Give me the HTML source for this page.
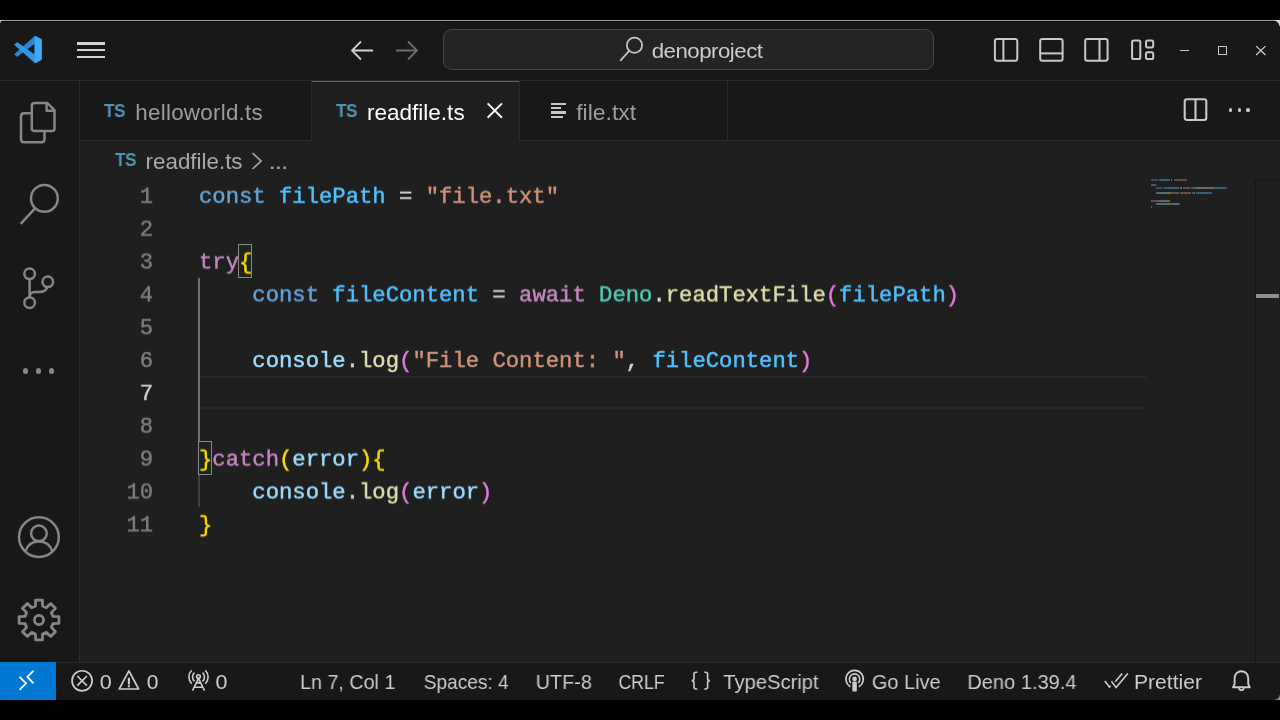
<!DOCTYPE html>
<html>
<head>
<meta charset="utf-8">
<title>readfile.ts - denoproject - Visual Studio Code</title>
<style>
html,body{margin:0;padding:0;background:#000;}
body{width:1280px;height:720px;overflow:hidden;position:relative;font-family:"Liberation Sans",sans-serif;}
div,span,svg{position:absolute;box-sizing:border-box;}
span.i{position:static;}
#win{left:0;top:20px;width:1280px;height:680px;background:#181818;border-radius:0;overflow:hidden;}
#topline{left:0;top:20px;width:1280px;height:2px;background:#070707;border-top:1px solid #a2a2a2;}
#titleborder{left:0;top:79.6px;width:1280px;height:1px;background:#2b2b2b;}
#actborder{left:79px;top:80.6px;width:1px;height:582px;background:#2b2b2b;}
#tabborder{left:80px;top:139.8px;width:1200px;height:1px;background:#2b2b2b;}
#editor{left:80px;top:140.8px;width:1200px;height:522px;background:#1f1f1f;}
#statusborder{left:0;top:661.8px;width:1280px;height:1px;background:#2b2b2b;}
.tabsep{top:80.6px;width:1px;height:59.2px;background:#2b2b2b;}
.lbl,.ts,.st,.code,.ln{will-change:transform;}
.lbl{white-space:nowrap;font-size:22px;line-height:26px;height:26px;color:#9d9d9d;}
.ts{font-weight:bold;color:#4f93b6;font-size:18.6px;line-height:20px;height:20px;white-space:nowrap;letter-spacing:-0.5px;transform-origin:0 0;transform:scaleX(0.93);}
.st{white-space:nowrap;font-size:20.6px;line-height:24px;height:24px;top:670.4px;color:#cccccc;}
.code{left:199px;font-family:"Liberation Mono",monospace;font-size:22.22px;line-height:37px;-webkit-text-stroke:0.45px;height:33px;white-space:pre;color:#d4d4d4;}
.ln{font-family:"Liberation Mono",monospace;font-size:22.17px;line-height:37px;-webkit-text-stroke:0.4px;height:33px;width:60px;text-align:right;color:#7b7e84;left:93px;white-space:pre;}
.k{color:#62a3da}.v{color:#4fc1ff}.s{color:#ce9178}.c{color:#c586c0}.t{color:#4ec9b0}.f{color:#dcdcaa}.p{color:#9cdcfe}.b1{color:#ffd700}.b2{color:#dc7cd9}
</style>
</head>
<body>
<div id="win"></div>
<div id="topline"></div>
<div id="titleborder"></div>
<div id="actborder"></div>
<div id="tabborder"></div>
<div id="editor"></div>
<div id="statusborder"></div>
<!--CORNERS-->
<div style="left:1274px;top:20px;width:6px;height:6px;background:radial-gradient(circle at 0 100%, rgba(0,0,0,0) 4.6px, #d6d6d6 5.8px)"></div>
<div style="left:1275px;top:695px;width:5px;height:5px;background:radial-gradient(circle at 0 0, rgba(0,0,0,0) 4px, #9a9a9a 5.2px)"></div>
<div style="left:0px;top:20px;width:3px;height:3px;background:radial-gradient(circle at 100% 100%, rgba(0,0,0,0) 2.2px, #d0d0d0 3px)"></div>
<!--TITLEBAR-->
<!-- VS Code logo -->
<svg style="left:13px;top:35px" width="30" height="29" viewBox="0 0 30 29">
  <path d="M21.600 1.300 L21.600 8.800 L4.100 21.700 L1.300 19.300 Z" fill="#2a86d2" stroke="#2a86d2" stroke-width="0.300" stroke-linejoin="round"/>
  <path d="M21.600 27.700 L21.600 19.500 L4.100 7.300 L1.300 9.700 Z" fill="#2f97e6" stroke="#2f97e6" stroke-width="0.300" stroke-linejoin="round"/>
  <path d="M22.300 1.900 L28 4.900 L28 24.100 L22.300 27.100 Z" fill="#3ea9f5" stroke="#3ea9f5" stroke-width="1.800" stroke-linejoin="round"/>
</svg>
<!-- hamburger -->
<div style="left:77px;top:42.4px;width:28px;height:2.3px;background:#d4d4d4"></div>
<div style="left:77px;top:49.2px;width:28px;height:2.3px;background:#d4d4d4"></div>
<div style="left:77px;top:56.1px;width:28px;height:2.3px;background:#d4d4d4"></div>
<!-- nav arrows -->
<svg style="left:349px;top:39px" width="26" height="24" viewBox="0 0 26 24"><path d="M12 2.5 L3 11.5 L12 20.5 M3 11.5 H24" fill="none" stroke="#d0d0d0" stroke-width="1.8"/></svg>
<svg style="left:394px;top:39px" width="26" height="24" viewBox="0 0 26 24"><path d="M14 2.5 L23 11.5 L14 20.5 M23 11.5 H2" fill="none" stroke="#6e6e6e" stroke-width="1.8"/></svg>
<!-- command center -->
<div style="left:443px;top:29.3px;width:491px;height:40.7px;border:1.2px solid #484848;border-radius:9px;background:#242424"></div>
<svg style="left:617px;top:34px" width="30" height="30" viewBox="0 0 30 30"><circle cx="17.5" cy="11.3" r="7.6" fill="none" stroke="#c4c4c4" stroke-width="1.8"/><path d="M12.2 16.8 L3.2 26.8" stroke="#c4c4c4" stroke-width="1.8" fill="none"/></svg>
<span id="t_cmd" class="lbl" style="transform-origin:0 0;transform:translateX(0.64px) scaleX(1.1133);left:651px;top:38px;font-size:20px;color:#cccccc;letter-spacing:-0.45px">denoproject</span>
<!-- layout controls -->
<svg style="left:992px;top:35.5px" width="28" height="28" viewBox="0 0 28 28"><rect x="2.9" y="2.9" width="22.4" height="21.8" rx="2.2" fill="none" stroke="#c8c8c8" stroke-width="2"/><path d="M11.4 3 V24.6" stroke="#c8c8c8" stroke-width="2"/></svg>
<svg style="left:1037px;top:35.5px" width="28" height="28" viewBox="0 0 28 28"><rect x="3.2" y="2.9" width="22.4" height="21.8" rx="2.2" fill="none" stroke="#c8c8c8" stroke-width="2"/><path d="M3.2 17.4 H25.6" stroke="#c8c8c8" stroke-width="2"/></svg>
<svg style="left:1082px;top:35.5px" width="28" height="28" viewBox="0 0 28 28"><rect x="3.2" y="2.9" width="22.4" height="21.8" rx="2.2" fill="none" stroke="#c8c8c8" stroke-width="2"/><path d="M17.5 3 V24.6" stroke="#c8c8c8" stroke-width="2"/></svg>
<svg style="left:1129px;top:35.5px" width="28" height="28" viewBox="0 0 28 28"><rect x="3.100" y="4.600" width="8.200" height="18.500" rx="1.600" fill="none" stroke="#c8c8c8" stroke-width="2"/><rect x="17" y="4.600" width="7.200" height="6.800" rx="1.600" fill="none" stroke="#c8c8c8" stroke-width="2"/><rect x="17" y="16.300" width="7.200" height="6.800" rx="1.600" fill="none" stroke="#c8c8c8" stroke-width="2"/></svg>
<!-- window controls -->
<div style="left:1180px;top:50px;width:9.3px;height:1.1px;background:#c8c8c8"></div>
<div style="left:1217.5px;top:45.7px;width:9.6px;height:9.6px;border:1px solid #c8c8c8"></div>
<svg style="left:1254px;top:44px" width="14" height="14" viewBox="0 0 14 14"><path d="M2.100 2.100 L11.500 11 M11.500 2.100 L2.100 11" stroke="#d4d4d4" stroke-width="1.200" fill="none"/></svg>
<!--/TITLEBAR-->
<!--ACTIVITY-->
<!-- files icon -->
<svg style="left:16px;top:98px" width="44" height="50" viewBox="0 0 44 50">
  <g fill="none" stroke="#868686" stroke-width="2.5" stroke-linejoin="round">
    <path d="M15.6 15.3 H8 Q5 15.3 5 18.3 V41.2 Q5 44.2 8 44.2 H25.5 Q28.5 44.2 28.5 41.200 V33.8"/>
    <path d="M18.7 4.900 H31.2 L38.5 12.200 V30.8 Q38.5 33 36.3 33 H18.700 Q15.8 33 15.8 30.800 V7.800 Q15.800 4.900 18.700 4.900 Z"/>
    <path d="M30.6 5.4 V12.8 H38"/>
  </g>
</svg>
<!-- search icon -->
<svg style="left:14px;top:178px" width="52" height="52" viewBox="0 0 52 52">
  <circle cx="30.4" cy="20.4" r="13.4" fill="none" stroke="#868686" stroke-width="2.5"/>
  <path d="M21 30.400 L6.7 45.8" stroke="#868686" stroke-width="2.5" fill="none"/>
</svg>
<!-- source control -->
<svg style="left:14px;top:262px" width="52" height="52" viewBox="0 0 52 52">
  <g fill="none" stroke="#868686" stroke-width="2.5">
    <circle cx="15.6" cy="11.8" r="5.3"/>
    <circle cx="15.600" cy="40.7" r="5.300"/>
    <circle cx="33.8" cy="19.8" r="5.300"/>
    <path d="M15.600 17.1 V35.4"/>
    <path d="M33.3 25.1 Q32 30 25 30 H21 Q15.600 30 15.600 35.4"/>
  </g>
</svg>
<!-- dots -->
<div style="left:23px;top:368.3px;width:5.4px;height:5.4px;border-radius:50%;background:#868686"></div>
<div style="left:35.8px;top:368.300px;width:5.4px;height:5.4px;border-radius:50%;background:#868686"></div>
<div style="left:48.8px;top:368.300px;width:5.4px;height:5.4px;border-radius:50%;background:#868686"></div>
<!-- account -->
<svg style="left:15px;top:513px" width="48" height="48" viewBox="0 0 48 48">
  <g fill="none" stroke="#868686" stroke-width="2.5">
    <circle cx="23.9" cy="24.1" r="19.9"/>
    <circle cx="23.900" cy="20.3" r="7.8"/>
    <path d="M10.6 38.2 Q13.6 28.6 23.900 28.6 Q34.2 28.600 37.2 38.200"/>
  </g>
</svg>
<!-- gear placeholder (generated) -->
<svg style="left:14.9px;top:596px" width="48" height="48" viewBox="0 0 48 48"><g fill="none" stroke="#868686" stroke-width="2.8" stroke-linejoin="round"><path d="M20.44 10.05 L20.58 4.09 L27.42 4.09 L27.56 10.05 L31.35 11.62 L35.66 7.51 L40.49 12.34 L36.38 16.65 L37.95 20.44 L43.91 20.58 L43.91 27.42 L37.95 27.56 L36.38 31.35 L40.49 35.66 L35.66 40.49 L31.35 36.38 L27.56 37.95 L27.42 43.91 L20.58 43.91 L20.44 37.95 L16.65 36.38 L12.34 40.49 L7.51 35.66 L11.62 31.35 L10.05 27.56 L4.09 27.42 L4.09 20.58 L10.05 20.44 L11.62 16.65 L7.51 12.34 L12.34 7.51 L16.65 11.62 Z"/><circle cx="24" cy="24" r="4.6"/></g></svg>
<!--/ACTIVITY-->
<!--TABS-->
<!-- tab separators -->
<div class="tabsep" style="left:311px"></div>
<div class="tabsep" style="left:519px"></div>
<div class="tabsep" style="left:727.4px"></div>
<!-- active tab -->
<div style="left:312px;top:80.6px;width:207px;height:60.4px;background:#1f1f1f"></div>
<div style="left:312px;top:80.5px;width:207px;height:1.4px;background:#2178c4"></div>
<!-- tab 1 -->
<span class="ts" style="left:104.3px;top:100.7px">TS</span>
<span id="t_tab1" class="lbl" style="transform-origin:0 0;transform:translateX(0.31px) scaleX(1.0170);left:135px;top:100px;letter-spacing:0.25px">helloworld.ts</span>
<!-- tab 2 -->
<span class="ts" style="left:336.3px;top:100.7px">TS</span>
<span id="t_tab2" class="lbl" style="transform-origin:0 0;transform:translateX(0.88px) scaleX(1.0252);left:366px;top:100px;color:#ffffff">readfile.ts</span>
<svg style="left:484px;top:100px" width="22" height="22" viewBox="0 0 22 22"><path d="M3.6 3.400 L18 17.8 M18 3.400 L3.600 17.800" stroke="#f4f4f4" stroke-width="2" fill="none"/></svg>
<!-- tab 3 -->
<div style="left:551px;top:102.6px;width:15px;height:2.3px;background:#c6c6c6"></div>
<div style="left:551px;top:107px;width:9.5px;height:2.3px;background:#c6c6c6"></div>
<div style="left:551px;top:111.4px;width:15px;height:2.3px;background:#c6c6c6"></div>
<div style="left:551px;top:115.8px;width:11.5px;height:2.3px;background:#c6c6c6"></div>
<span id="t_tab3" class="lbl" style="transform-origin:0 0;transform:translateX(0.21px) scaleX(1.0448);left:576px;top:100px">file.txt</span>
<!-- editor actions -->
<svg style="left:1181px;top:96px" width="28" height="28" viewBox="0 0 28 28"><rect x="3.700" y="3.200" width="21.6" height="20.8" rx="2.200" fill="none" stroke="#c8c8c8" stroke-width="2.1"/><path d="M14.5 3.200 V24" stroke="#c8c8c8" stroke-width="2.1"/></svg>
<div style="left:1228.8px;top:108.3px;width:3.7px;height:3.7px;border-radius:50%;background:#c8c8c8"></div>
<div style="left:1237.5px;top:108.3px;width:3.7px;height:3.7px;border-radius:50%;background:#c8c8c8"></div>
<div style="left:1246.300px;top:108.3px;width:3.7px;height:3.7px;border-radius:50%;background:#c8c8c8"></div>
<!-- breadcrumb -->
<span class="ts" style="left:115.2px;top:149.7px">TS</span>
<span id="t_bc" class="lbl" style="transform-origin:0 0;transform:translateX(0.60px) scaleX(1.0162);left:145px;top:149px;color:#a9a9a9">readfile.ts</span>
<svg style="left:249px;top:150px" width="16" height="22" viewBox="0 0 16 22"><path d="M3.5 3 L12 11 L3.500 19" stroke="#a9a9a9" stroke-width="1.700" fill="none"/></svg>
<span id="t_bcd" class="lbl" style="transform-origin:0 0;transform:translateX(0.61px) scaleX(1.1961);left:268px;top:149px;color:#a9a9a9;letter-spacing:-0.9px">...</span>
<!--/TABS-->
<!--EDITOR-->
<!-- current line highlight -->
<div style="left:199px;top:375.8px;width:947px;height:32.8px;border-top:2px solid #282828;border-bottom:2px solid #282828"></div>
<!-- indent guides -->
<div style="left:198.4px;top:277.6px;width:1.9px;height:163px;background:#707070"></div>
<div style="left:198.4px;top:474.4px;width:1.9px;height:32.8px;background:#404040"></div>
<!-- bracket match -->
<div style="left:238.3px;top:243.8px;width:14px;height:34px;border:1.6px solid #888888;background:rgba(0,100,0,0.1)"></div>
<div style="left:198.3px;top:440.6px;width:14px;height:34px;border:1.6px solid #888888;background:rgba(0,100,0,0.1)"></div>
<!-- line numbers -->
<span class="ln" style="top:178px;transform:translateY(0.80px) rotate(0.002deg)">1</span>
<span class="ln" style="top:211px;transform:translateY(0.65px) rotate(0.002deg)">2</span>
<span class="ln" style="top:244px;transform:translateY(0.50px) rotate(0.002deg)">3</span>
<span class="ln" style="top:277px;transform:translateY(0.35px) rotate(0.002deg)">4</span>
<span class="ln" style="top:310px;transform:translateY(0.20px) rotate(0.002deg)">5</span>
<span class="ln" style="top:343px;transform:translateY(0.05px) rotate(0.002deg)">6</span>
<span class="ln" style="top:375px;transform:translateY(0.90px) rotate(0.002deg);color:#cccccc">7</span>
<span class="ln" style="top:408px;transform:translateY(0.75px) rotate(0.002deg)">8</span>
<span class="ln" style="top:441px;transform:translateY(0.60px) rotate(0.002deg)">9</span>
<span class="ln" style="top:474px;transform:translateY(0.45px) rotate(0.002deg)">10</span>
<span class="ln" style="top:507px;transform:translateY(0.30px) rotate(0.002deg)">11</span>
<!-- code -->
<span class="code" style="top:178px;transform:translateY(0.80px) rotate(0.002deg)"><span class="i k">const</span> <span class="i v">filePath</span> = <span class="i s">"file.txt"</span></span>
<span class="code" style="top:244px;transform:translateY(0.50px) rotate(0.002deg)"><span class="i c">try</span><span class="i b1">{</span></span>
<span class="code" style="top:277px;transform:translateY(0.35px) rotate(0.002deg)">    <span class="i k">const</span> <span class="i v">fileContent</span> = <span class="i c">await</span> <span class="i t">Deno</span>.<span class="i f">readTextFile</span><span class="i b2">(</span><span class="i v">filePath</span><span class="i b2">)</span></span>
<span class="code" style="top:343px;transform:translateY(0.05px) rotate(0.002deg)">    <span class="i p">console</span>.<span class="i f">log</span><span class="i b2">(</span><span class="i s">"File Content: "</span>, <span class="i v">fileContent</span><span class="i b2">)</span></span>
<span class="code" style="top:441px;transform:translateY(0.60px) rotate(0.002deg)"><span class="i b1">}</span><span class="i c">catch</span><span class="i b1">(</span><span class="i p">error</span><span class="i b1">){</span></span>
<span class="code" style="top:474px;transform:translateY(0.45px) rotate(0.002deg)">    <span class="i p">console</span>.<span class="i f">log</span><span class="i b2">(</span><span class="i p">error</span><span class="i b2">)</span></span>
<span class="code" style="top:507px;transform:translateY(0.30px) rotate(0.002deg)"><span class="i b1">}</span></span>
<!-- scrollbar / overview ruler -->
<div style="left:1254.6px;top:179px;width:1.4px;height:484px;background:#141414"></div>
<div style="left:1255px;top:179px;width:25px;height:1.2px;background:#161616"></div>
<div style="left:1256px;top:294px;width:23.2px;height:4px;background:#8e8e8e"></div>
<!--MINIMAP-->
<div style="left:1151.00px;top:179.05px;width:6.67px;height:1.8px;background:#569cd6;opacity:0.4"></div>
<div style="left:1159.01px;top:179.05px;width:10.68px;height:1.8px;background:#4fc1ff;opacity:0.4"></div>
<div style="left:1171.03px;top:179.05px;width:1.33px;height:1.8px;background:#d4d4d4;opacity:0.4"></div>
<div style="left:1173.70px;top:179.05px;width:13.35px;height:1.8px;background:#ce9178;opacity:0.4"></div>
<div style="left:1151.00px;top:184.39px;width:4.00px;height:1.8px;background:#c586c0;opacity:0.4"></div>
<div style="left:1155.01px;top:184.39px;width:1.33px;height:1.8px;background:#ffd700;opacity:0.4"></div>
<div style="left:1156.34px;top:187.06px;width:6.67px;height:1.8px;background:#569cd6;opacity:0.4"></div>
<div style="left:1164.35px;top:187.06px;width:14.68px;height:1.8px;background:#4fc1ff;opacity:0.4"></div>
<div style="left:1180.37px;top:187.06px;width:1.33px;height:1.8px;background:#d4d4d4;opacity:0.4"></div>
<div style="left:1183.04px;top:187.06px;width:6.67px;height:1.8px;background:#c586c0;opacity:0.4"></div>
<div style="left:1191.05px;top:187.06px;width:5.34px;height:1.8px;background:#4ec9b0;opacity:0.4"></div>
<div style="left:1196.39px;top:187.06px;width:1.33px;height:1.8px;background:#d4d4d4;opacity:0.4"></div>
<div style="left:1197.72px;top:187.06px;width:16.02px;height:1.8px;background:#dcdcaa;opacity:0.4"></div>
<div style="left:1213.74px;top:187.06px;width:1.33px;height:1.8px;background:#da70d6;opacity:0.4"></div>
<div style="left:1215.08px;top:187.06px;width:10.68px;height:1.8px;background:#4fc1ff;opacity:0.4"></div>
<div style="left:1225.76px;top:187.06px;width:1.33px;height:1.8px;background:#da70d6;opacity:0.4"></div>
<div style="left:1156.34px;top:192.40px;width:9.34px;height:1.8px;background:#9cdcfe;opacity:0.4"></div>
<div style="left:1165.68px;top:192.40px;width:1.33px;height:1.8px;background:#d4d4d4;opacity:0.4"></div>
<div style="left:1167.02px;top:192.40px;width:4.00px;height:1.8px;background:#dcdcaa;opacity:0.4"></div>
<div style="left:1171.03px;top:192.40px;width:1.33px;height:1.8px;background:#da70d6;opacity:0.4"></div>
<div style="left:1172.36px;top:192.40px;width:6.67px;height:1.8px;background:#ce9178;opacity:0.4"></div>
<div style="left:1180.37px;top:192.40px;width:10.68px;height:1.8px;background:#ce9178;opacity:0.4"></div>
<div style="left:1192.39px;top:192.40px;width:1.33px;height:1.8px;background:#ce9178;opacity:0.4"></div>
<div style="left:1193.72px;top:192.40px;width:1.33px;height:1.8px;background:#d4d4d4;opacity:0.4"></div>
<div style="left:1196.39px;top:192.40px;width:14.68px;height:1.8px;background:#4fc1ff;opacity:0.4"></div>
<div style="left:1211.08px;top:192.40px;width:1.33px;height:1.8px;background:#da70d6;opacity:0.4"></div>
<div style="left:1151.00px;top:200.41px;width:1.33px;height:1.8px;background:#ffd700;opacity:0.4"></div>
<div style="left:1152.34px;top:200.41px;width:6.67px;height:1.8px;background:#c586c0;opacity:0.4"></div>
<div style="left:1159.01px;top:200.41px;width:1.33px;height:1.8px;background:#ffd700;opacity:0.4"></div>
<div style="left:1160.35px;top:200.41px;width:6.67px;height:1.8px;background:#9cdcfe;opacity:0.4"></div>
<div style="left:1167.02px;top:200.41px;width:1.33px;height:1.8px;background:#ffd700;opacity:0.4"></div>
<div style="left:1168.36px;top:200.41px;width:1.33px;height:1.8px;background:#ffd700;opacity:0.4"></div>
<div style="left:1156.34px;top:203.08px;width:9.34px;height:1.8px;background:#9cdcfe;opacity:0.4"></div>
<div style="left:1165.68px;top:203.08px;width:1.33px;height:1.8px;background:#d4d4d4;opacity:0.4"></div>
<div style="left:1167.02px;top:203.08px;width:4.00px;height:1.8px;background:#dcdcaa;opacity:0.4"></div>
<div style="left:1171.03px;top:203.08px;width:1.33px;height:1.8px;background:#da70d6;opacity:0.4"></div>
<div style="left:1172.36px;top:203.08px;width:6.67px;height:1.8px;background:#9cdcfe;opacity:0.4"></div>
<div style="left:1179.04px;top:203.08px;width:1.33px;height:1.8px;background:#da70d6;opacity:0.4"></div>
<div style="left:1151.00px;top:205.75px;width:1.33px;height:1.8px;background:#ffd700;opacity:0.4"></div>
<!--/MINIMAP-->
<!--/EDITOR-->
<!--STATUS-->
<!-- remote indicator -->
<div style="left:0;top:662px;width:56px;height:38px;background:#0078d4"></div>
<svg style="left:14px;top:666px" width="28" height="28" viewBox="0 0 28 28"><path d="M5.5 10.9 L12 17.300 L5.500 23.800 M19.6 4.600 L13.3 10.900 L19.600 17.300" fill="none" stroke="#ffffff" stroke-width="1.8"/></svg>
<!-- errors / warnings -->
<svg style="left:70px;top:668px" width="26" height="26" viewBox="0 0 26 26"><circle cx="12.1" cy="12.800" r="10.050" fill="none" stroke="#cccccc" stroke-width="1.700"/><path d="M7.300 8 L16.900 17.600 M16.900 8 L7.300 17.600" stroke="#cccccc" stroke-width="1.700" fill="none"/></svg>
<span id="t_0a" class="st" style="transform-origin:0 0;transform:translateX(0.84px) scaleX(1.0450);left:99px">0</span>
<svg style="left:116px;top:667px" width="26" height="26" viewBox="0 0 26 26"><path d="M12.900 3.900 L22.600 22 H3.200 Z" fill="none" stroke="#cccccc" stroke-width="1.700" stroke-linejoin="round"/><path d="M12.900 10.800 V17.400 M12.900 18.300 V20.200" stroke="#cccccc" stroke-width="2.100" fill="none"/></svg>
<span id="t_0b" class="st" style="transform-origin:0 0;transform:translateX(0.73px) scaleX(1.0227);left:146px">0</span>
<!-- broadcast -->
<svg style="left:186px;top:668px" width="26" height="26" viewBox="0 0 26 26">
 <g fill="none" stroke="#cccccc" stroke-width="1.600">
  <path d="M12.500 10.400 L6.500 22.600 M12.500 10.400 L18.500 22.600 M9.700 14.900 H15.300 M7.800 19.200 H17.200"/>
  <circle cx="12.500" cy="8.600" r="1.800"/>
  <path d="M16.51 4.54 A6.00 6.00 0 0 1 16.51 13.46 M8.49 4.54 A6.00 6.00 0 0 0 8.49 13.46 M19.29 2.21 A9.60 9.60 0 0 1 19.29 15.79 M5.71 2.21 A9.60 9.60 0 0 0 5.71 15.79"/>
 </g>
</svg>
<span id="t_0c" class="st" style="transform-origin:0 0;transform:translateX(0.54px) scaleX(1.0431);left:215px">0</span>
<span id="t_ln" class="st" style="transform-origin:0 0;transform:translateX(0.04px) scaleX(0.9567);left:300px">Ln 7, Col 1</span>
<span id="t_sp" class="st" style="transform-origin:0 0;transform:translateX(0.71px) scaleX(0.9267);left:423px">Spaces: 4</span>
<span id="t_utf" class="st" style="transform-origin:0 0;transform:translateX(0.71px) scaleX(0.9612);left:535px">UTF-8</span>
<span id="t_crlf" class="st" style="transform-origin:0 0;transform:translateX(0.56px) scaleX(0.8551);left:618px">CRLF</span>
<svg style="left:689px;top:669px" width="24" height="24" viewBox="0 0 24 24"><g fill="none" stroke="#cccccc" stroke-width="1.600"><path d="M8.300 3.200 H7 Q5 3.200 5 5.200 V9.200 Q5 11.600 2.700 11.600 Q5 11.600 5 14 V18 Q5 20 7 20 H8.300"/><path d="M15.300 3.200 H16.600 Q18.600 3.200 18.600 5.200 V9.200 Q18.600 11.600 20.900 11.600 Q18.600 11.600 18.600 14 V18 Q18.600 20 16.600 20 H15.300"/></g></svg>
<span id="t_ts" class="st" style="transform-origin:0 0;transform:translateX(0.22px) scaleX(0.9805);left:723px">TypeScript</span>
<!-- go live -->
<svg style="left:843px;top:669px" width="24" height="24" viewBox="0 0 24 24">
 <g fill="none" stroke="#cccccc" stroke-width="1.600">
  <circle cx="11.600" cy="9.900" r="2.300" fill="#cccccc" stroke="none"/>
  <rect x="9.350" y="12.500" width="4.500" height="9.900" rx="1" fill="#cccccc" stroke="none"/>
  <path d="M8.00 13.85 A5.20 5.20 0 1 1 15.20 13.85"/>
  <path d="M7.40 17.72 A8.70 8.70 0 1 1 15.80 17.72"/>
 </g>
</svg>
<span id="t_gl" class="st" style="transform-origin:0 0;transform:translateX(0.83px) scaleX(0.9688);left:871px">Go Live</span>
<span id="t_deno" class="st" style="transform-origin:0 0;transform:translateX(0.36px) scaleX(0.9724);left:967px">Deno 1.39.4</span>
<svg style="left:1102px;top:668px" width="28" height="24" viewBox="0 0 28 24"><path d="M2.800 12.900 L7.500 19 L8.700 17.700 M9.400 13.300 L14.100 19.400 L25.800 5.400 M13.200 13.800 L20.200 5.400" fill="none" stroke="#cccccc" stroke-width="1.600"/></svg>
<span id="t_pr" class="st" style="transform-origin:0 0;transform:translateX(0.97px) scaleX(1.0243);left:1133px">Prettier</span>
<!-- bell -->
<svg style="left:1229px;top:667px" width="26" height="27" viewBox="0 0 26 27"><path d="M4 20.300 L5.600 16.800 V11 A6.800 6.800 0 0 1 19.200 11 V16.800 L20.800 20.300 Z" fill="none" stroke="#cccccc" stroke-width="1.900" stroke-linejoin="round"/><path d="M9.800 21 A2.700 3 0 0 0 15 21" fill="none" stroke="#cccccc" stroke-width="1.700"/></svg>
<!--/STATUS-->
</body>
</html>
